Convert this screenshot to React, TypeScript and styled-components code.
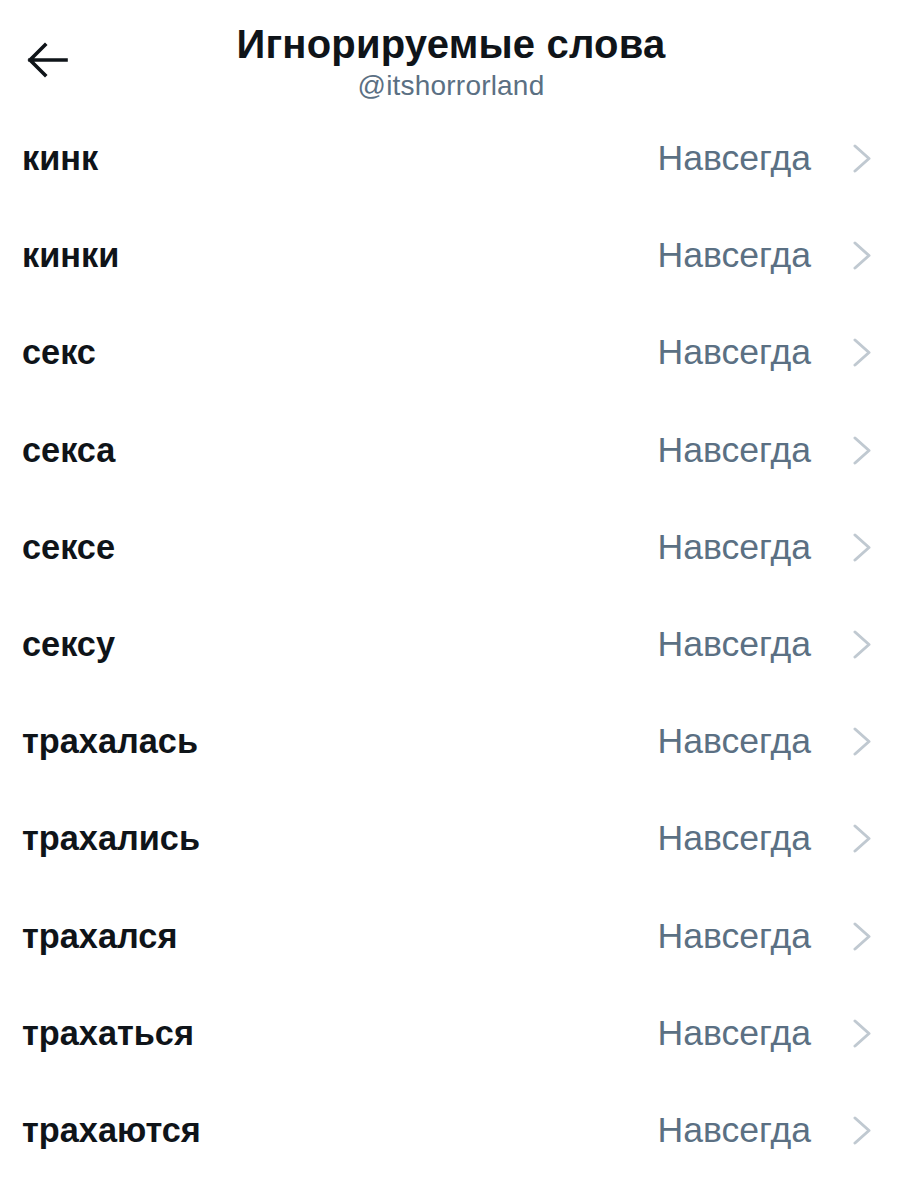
import React from "react";
import styled, { createGlobalStyle } from "styled-components";

const Global = createGlobalStyle`
  html, body { margin: 0; padding: 0; background: #ffffff; }
  body { font-family: "Liberation Sans", Arial, sans-serif; }
`;

const Page = styled.div`
  width: 902px;
  height: 1200px;
  overflow: hidden;
  background: #fff;
  display: flex;
  flex-direction: column;
`;

const Header = styled.header`
  position: relative;
  height: 110px;
  display: flex;
  flex-direction: column;
  align-items: center;
  padding-top: 21px;
  box-sizing: border-box;
`;

const Back = styled.button`
  position: absolute;
  left: 24px;
  top: 39px;
  width: 46px;
  height: 42px;
  border: none;
  background: none;
  padding: 0;
  display: flex;
  align-items: center;
  justify-content: center;
`;

const Title = styled.h1`
  margin: 0;
  font-size: 40px;
  line-height: 46px;
  font-weight: 700;
  color: #0f1419;
  letter-spacing: 0.2px;
`;

const Subtitle = styled.div`
  font-size: 28px;
  line-height: 30px;
  color: #5b7083;
  margin-top: 4px;
  letter-spacing: 0.2px;
`;

const List = styled.ul`
  list-style: none;
  margin: 0;
  padding: 0;
  display: flex;
  flex-direction: column;
`;

const Row = styled.li`
  height: 97.2px;
  display: flex;
  align-items: center;
  padding: 0 30px 0 22px;
`;

const Word = styled.span`
  flex: 1;
  font-size: 34.3px;
  font-weight: 700;
  color: #0f1419;
`;

const Duration = styled.span`
  font-size: 35.6px;
  color: #5b7083;
  margin-right: 42px;
`;

const words = [
  "кинк",
  "кинки",
  "секс",
  "секса",
  "сексе",
  "сексу",
  "трахалась",
  "трахались",
  "трахался",
  "трахаться",
  "трахаются",
];

const Chevron = () => (
  <svg width="19" height="29" viewBox="0 0 19 29" fill="none">
    <path d="M2 2 L16 14.5 L2 27" stroke="#c0c9d1" strokeWidth="3" strokeLinecap="round" strokeLinejoin="round" />
  </svg>
);

const Arrow = () => (
  <svg width="42" height="36" viewBox="0 0 42 36" fill="none">
    <path d="M40 18 H4 M19 3 L4 18 L19 33" stroke="#0f1419" strokeWidth="3.6" strokeLinecap="square" strokeLinejoin="miter" />
  </svg>
);

export default function App() {
  return (
    <Page>
      <Global />
      <Header>
        <Back aria-label="Назад">
          <Arrow />
        </Back>
        <Title>Игнорируемые слова</Title>
        <Subtitle>@itshorrorland</Subtitle>
      </Header>
      <List>
        {words.map((w) => (
          <Row key={w}>
            <Word>{w}</Word>
            <Duration>Навсегда</Duration>
            <Chevron />
          </Row>
        ))}
      </List>
    </Page>
  );
}
